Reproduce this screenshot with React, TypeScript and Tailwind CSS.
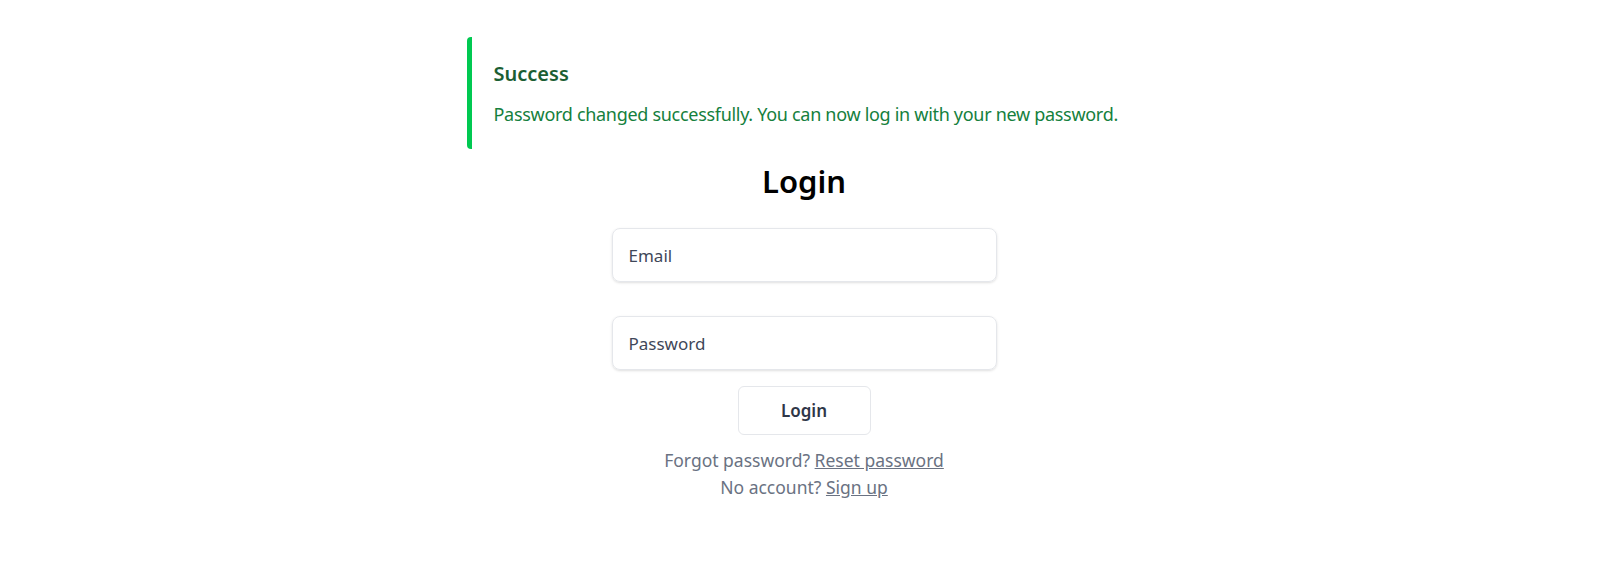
import { useState } from "react";

export default function App() {
  const [email, setEmail] = useState("");
  const [password, setPassword] = useState("");

  return (
    <div className="min-h-screen bg-white font-['Noto_Sans',sans-serif] pr-[15px]">
      <div className="flex flex-col items-center pt-[37px]">
        {/* Alert */}
        <div className="w-[675px] rounded-l-[4px] border-l-[5px] border-green-500 bg-white pl-[22px] pr-6 pt-[23px] pb-[21px]">
          <h4 className="text-xl leading-7 font-semibold text-[#1b5e33]">Success</h4>
          <p className="mt-3 whitespace-nowrap text-lg leading-7 tracking-[-0.3px] text-[#15803d]">
            Password changed successfully. You can now log in with your new password.
          </p>
        </div>

        <h1 className="mt-3 text-[31px] leading-10 font-semibold text-black">Login</h1>

        <form
          className="mt-[27px] flex flex-col items-center"
          onSubmit={(e) => e.preventDefault()}
        >
          <input
            type="email"
            placeholder="Email"
            value={email}
            onChange={(e) => setEmail(e.target.value)}
            className="h-[54px] w-[385px] rounded-lg border border-gray-200 px-4 text-[17px] text-gray-700 shadow-sm outline-none placeholder:text-[#3f4759]"
          />
          <input
            type="password"
            placeholder="Password"
            value={password}
            onChange={(e) => setPassword(e.target.value)}
            className="mt-[34px] h-[54px] w-[385px] rounded-lg border border-gray-200 px-4 text-[17px] text-gray-700 shadow-sm outline-none placeholder:text-[#3f4759]"
          />
          <button
            type="submit"
            className="mt-4 h-[49px] w-[133px] rounded-md border border-gray-200 bg-white text-[17px] font-semibold text-[#2f3648]"
          >
            Login
          </button>
        </form>

        <div className="mt-3 flex flex-col items-center text-[17.5px] leading-[27px] text-gray-500">
          <p>
            Forgot password?{" "}
            <a href="#" className="underline">
              Reset password
            </a>
          </p>
          <p>
            No account?{" "}
            <a href="#" className="underline">
              Sign up
            </a>
          </p>
        </div>
      </div>
    </div>
  );
}
